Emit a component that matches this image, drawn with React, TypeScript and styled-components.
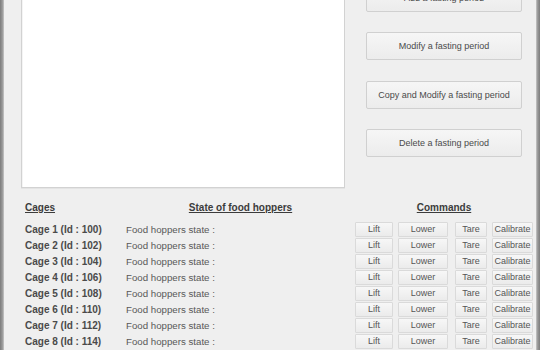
import React from "react";
import styled, { createGlobalStyle } from "styled-components";

const Global = createGlobalStyle`
  html, body { margin: 0; padding: 0; background: #efefef; }
  body { font-family: "Liberation Sans", Arial, sans-serif; }
  #root { width: 540px; height: 350px; overflow: hidden; }
`;

const Frame = styled.div`
  display: flex;
  width: 540px;
  height: 350px;
  overflow: hidden;
  background: #efefef;
`;

const EdgeBar = styled.div<{ $side: "left" | "right" }>`
  width: 4px;
  flex: none;
  background: ${(p) =>
    p.$side === "left"
      ? "linear-gradient(90deg, #7c7c7c, #9a9a9a 60%, #c8c8c8)"
      : "linear-gradient(90deg, #c8c8c8, #9a9a9a 40%, #7c7c7c)"};
`;

const Content = styled.div`
  flex: 1;
  display: flex;
  flex-direction: column;
`;

const TopSection = styled.div`
  display: flex;
  align-items: flex-start;
  padding-left: 17px;
`;

const ListPanel = styled.div`
  width: 322px;
  height: 187px;
  background: #ffffff;
  border: 1px solid #d2d2d2;
  border-top: none;
  box-shadow: inset 1px 0 0 #f4f4f4, 0 1px 0 #e4e4e4;
`;

const ActionColumn = styled.div`
  display: flex;
  flex-direction: column;
  gap: 20.5px;
  margin-left: 21px;
  margin-top: -16.5px;
`;

const ActionButton = styled.button`
  width: 156px;
  height: 28px;
  margin: 0;
  padding: 0;
  border: 1px solid #d0d0d0;
  border-radius: 2px;
  background: linear-gradient(#f6f6f6, #ececec);
  font-family: "Liberation Sans", Arial, sans-serif;
  font-size: 9px;
  color: #4a4a4a;
  text-align: center;
`;

const CageTable = styled.div`
  display: grid;
  grid-template-columns: 101px 229px 178px;
  grid-template-rows: 21px;
  grid-auto-rows: 16px;
  padding-left: 21px;
  margin-top: 13px;
`;

const HeaderCell = styled.div<{ $align: "left" | "center" }>`
  font-family: "Liberation Sans", Arial, sans-serif;
  font-size: 10px;
  font-weight: bold;
  color: #3c3c3c;
  text-decoration: underline;
  text-align: ${(p) => p.$align};
  line-height: 13px;
`;

const CageLabel = styled.div`
  font-size: 10px;
  font-weight: bold;
  color: #4a4a4a;
  line-height: 15px;
`;

const StateLabel = styled.div`
  font-size: 9.7px;
  color: #585858;
  line-height: 15px;
`;

const Commands = styled.div`
  display: flex;
  align-items: flex-start;
`;

const CmdButton = styled.button<{ $w: number; $gap: number }>`
  width: ${(p) => p.$w}px;
  height: 15px;
  margin: 0 ${(p) => p.$gap}px 0 0;
  padding: 0;
  border: 1px solid #dadada;
  border-radius: 1px;
  background: linear-gradient(#f7f7f7, #ebebeb);
  font-family: "Liberation Sans", Arial, sans-serif;
  font-size: 9px;
  line-height: 13px;
  color: #555;
  text-align: center;
`;

const cages = [
  [1, 100],
  [2, 102],
  [3, 104],
  [4, 106],
  [5, 108],
  [6, 110],
  [7, 112],
  [8, 114],
];

const cmds: { label: string; w: number; gap: number }[] = [
  { label: "Lift", w: 38, gap: 5 },
  { label: "Lower", w: 50, gap: 7 },
  { label: "Tare", w: 32, gap: 5 },
  { label: "Calibrate", w: 41, gap: 0 },
];

export default function App() {
  return (
    <>
      <Global />
      <Frame>
        <EdgeBar $side="left" />
        <Content>
          <TopSection>
            <ListPanel />
            <ActionColumn>
              <ActionButton>Add a fasting period</ActionButton>
              <ActionButton>Modify a fasting period</ActionButton>
              <ActionButton>Copy and Modify a fasting period</ActionButton>
              <ActionButton>Delete a fasting period</ActionButton>
            </ActionColumn>
          </TopSection>
          <CageTable>
            <HeaderCell $align="left">Cages</HeaderCell>
            <HeaderCell $align="center">State of food hoppers</HeaderCell>
            <HeaderCell $align="center">Commands</HeaderCell>
            {cages.map(([n, id]) => (
              <React.Fragment key={n}>
                <CageLabel>
                  Cage {n} (Id : {id})
                </CageLabel>
                <StateLabel>Food hoppers state :</StateLabel>
                <Commands>
                  {cmds.map((c) => (
                    <CmdButton key={c.label} $w={c.w} $gap={c.gap}>
                      {c.label}
                    </CmdButton>
                  ))}
                </Commands>
              </React.Fragment>
            ))}
          </CageTable>
        </Content>
        <EdgeBar $side="right" />
      </Frame>
    </>
  );
}
